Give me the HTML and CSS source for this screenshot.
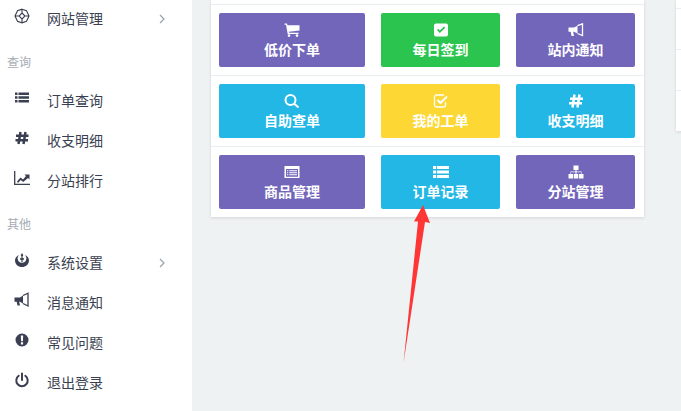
FILE: index.html
```html
<!DOCTYPE html>
<html lang="zh-CN">
<head>
<meta charset="utf-8">
<title>分站后台</title>
<link rel="stylesheet" href="styles.css">
</head>
<body>
<div class="app">
  <aside class="sidebar">
    <a class="item first">
      <svg class="nav-icon" viewBox="0 0 16 16"><path class="thin" d="M8 1.200 12.500 2.800 15 8 12.500 13.200 8 14.800 3.500 13.200 1 8 3.500 2.800ZM8 5 11 8 8 11 5 8ZM8 1.200V5M8 11V14.800M1 8H5M11 8H15"/></svg>
      <span class="label">网站管理</span>
      <svg class="chev" viewBox="0 0 6 10"><path d="M1 1l4 4-4 4"/></svg>
    </a>
    <div class="section">查询</div>
    <a class="item">
      <svg class="nav-icon" viewBox="0 0 16 16"><path class="fill" d="M1 2.500h2.500v2.500H1zM4.500 2.500H15v2.500H4.500zM1 6.200h2.500v2.500H1zM4.500 6.200H15v2.500H4.500zM1 9.900h2.500v2.500H1zM4.500 9.900H15v2.500H4.500z"/></svg>
      <span class="label">订单查询</span>
    </a>
    <a class="item">
      <svg class="nav-icon" viewBox="0 0 16 16"><path class="hash" d="M6.500 2 4.500 14M11.500 2 9.500 14M2 5.700h12.500M1.500 10.300H14"/></svg>
      <span class="label">收支明细</span>
    </a>
    <a class="item">
      <svg class="nav-icon" viewBox="0 0 16 16"><path class="line" d="M.700 1v13.300H16"/><path class="fill" d="M3 11.500 6.500 7.500 9 9.500 12 6 10.500 4.500H15.500V9.500L14 8 9.200 12 6.700 10 4 13Z"/></svg>
      <span class="label">分站排行</span>
    </a>
    <div class="section">其他</div>
    <a class="item">
      <svg class="nav-icon" viewBox="0 0 16 16"><path class="fill" d="M5 3C2.500 4 1 6 1 8.500 1 12.300 4.200 15 8 15S15 12.300 15 8.500C15 6 13.500 4 11 3 12 4.200 12.600 5.500 12.300 7 12 9 10.500 10.800 8 10.800S4 9 3.700 7C3.400 5.500 4 4.200 5 3Z"/><path class="fill" d="M8 1 9.300 3.300 8.600 4.300V6.300L10.300 5.800 9.500 7 10.300 8.200 8.600 7.800V10H7.400V7.800L5.700 8.200 6.500 7 5.700 5.800 7.400 6.300V4.300L6.700 3.300Z"/></svg>
      <span class="label">系统设置</span>
      <svg class="chev" viewBox="0 0 6 10"><path d="M1 1l4 4-4 4"/></svg>
    </a>
    <a class="item">
      <svg class="nav-icon" viewBox="0 0 16 16"><path class="fill" d="M.500 5.500H6L9 3.500V11.500L6 9.800H5.200L6 13.500H3.500L2.700 9.800H.500Z"/><path class="line" d="M9 3.500 14 1.200V14L9 11.500"/></svg>
      <span class="label">消息通知</span>
    </a>
    <a class="item">
      <svg class="nav-icon" viewBox="0 0 16 16"><path class="fill" fill-rule="evenodd" d="M8 1.500a6.500 6.500 0 1 0 0 13 6.500 6.500 0 0 0 0-13ZM6.800 3.500H9.200L8.900 9.200H7.100ZM6.900 10.300H9.100V12.400H6.900Z"/></svg>
      <span class="label">常见问题</span>
    </a>
    <a class="item">
      <svg class="nav-icon" viewBox="0 0 16 16"><path class="power" d="M8 1.500V8M4.700 3.800a5.700 5.700 0 1 0 6.600 0"/></svg>
      <span class="label">退出登录</span>
    </a>
  </aside>

  <main class="content">
    <section class="card">
      <div class="row">
        <a class="tile purple">
          <svg class="tile-icon" viewBox="0 0 16 14"><path class="w" d="M.500 .500H3L3.500 2.200H15.500V7.500L4.800 8.700 5 9.700H14.500V11H3.700L2 1.800H.500Z"/><circle class="w" cx="5" cy="12.600" r="1.300"/><circle class="w" cx="13" cy="12.600" r="1.300"/></svg>
          <span>低价下单</span>
        </a>
        <a class="tile green">
          <svg class="tile-icon" viewBox="0 0 16 14"><path class="w" fill-rule="evenodd" d="M3 .500H13A2 2 0 0 1 15 2.500V11.500A2 2 0 0 1 13 13.500H3A2 2 0 0 1 1 11.500V2.500A2 2 0 0 1 3 .500ZM4 7 6.800 10 12.300 4.800 11 3.500 6.800 7.500 5.300 5.700Z"/></svg>
          <span>每日签到</span>
        </a>
        <a class="tile purple">
          <svg class="tile-icon" viewBox="0 0 16 14"><path class="w" d="M.500 4.500H6L9.500 2.700V10.500L6 8.800H5.200L6 13H3.500L2.700 8.800H.500Z"/><path class="wl" d="M9.500 2.700 14.500 .8V12.500L9.500 10.500"/></svg>
          <span>站内通知</span>
        </a>
        <a class="tile blue">
          <svg class="tile-icon" viewBox="0 0 16 14"><circle class="wl2" cx="6.500" cy="6" r="5"/><path class="wl2" d="M10 9.600 14.500 13.500"/></svg>
          <span>自助查单</span>
        </a>
        <a class="tile yellow">
          <svg class="tile-icon" viewBox="0 0 16 14"><path class="wl" d="M12.500 8V11A2 2 0 0 1 10.500 13H3.500A2 2 0 0 1 1.500 11V3A2 2 0 0 1 3.500 1H11"/><path class="wl2" d="M4.500 6 7.500 9 14 2.500"/></svg>
          <span>我的工单</span>
        </a>
        <a class="tile blue">
          <svg class="tile-icon" viewBox="0 0 16 14"><path class="wl3" d="M6.500 .5 4.500 13.500M11.500 .5 9.500 13.500M2 4.700h13M1 9.300h13"/></svg>
          <span>收支明细</span>
        </a>
        <a class="tile purple">
          <svg class="tile-icon" viewBox="0 0 16 14"><path class="w" fill-rule="evenodd" d="M.500 1H15.500V13H.500ZM2 4V11.700H14V4ZM3 5.300H4.300V6.300H3ZM5.300 5.300H13V6.300H5.300ZM3 7.300H4.300V8.300H3ZM5.300 7.300H13V8.300H5.300ZM3 9.300H4.300V10.300H3ZM5.300 9.300H13V10.300H5.300Z"/></svg>
          <span>商品管理</span>
        </a>
        <a class="tile blue">
          <svg class="tile-icon" viewBox="0 0 16 14"><path class="w" d="M0 1H3V4H0ZM3.800 1H16V4H3.800ZM0 5.500H3V8.500H0ZM3.800 5.500H16V8.500H3.800ZM0 10H3V13H0ZM3.800 10H16V13H3.800Z"/></svg>
          <span>订单记录</span>
        </a>
        <a class="tile purple">
          <svg class="tile-icon" viewBox="0 0 16 14"><path class="w" d="M5.500 .5H10.500V5H8.500V6.500H13.500V9H15.500V13.500H11V9H13V7.300H8.500V9H10.300V13.500H5.700V9H7.500V7.300H3V9H5V13.500H.500V9H2.500V6.500H7.500V5H5.500Z"/></svg>
          <span>分站管理</span>
        </a>
      </div>
    </section>
    <section class="side-panel">
      <div class="side-row"></div>
      <div class="side-row"></div>
      <div class="side-row"></div>
    </section>
  </main>
</div>
<svg class="arrow" viewBox="0 0 681 411"><path d="M423 205 430 223 425 222 403.500 363 418 221.500 414 221.500Z"/></svg>
</body>
</html>
```
FILE: styles.css
```css
* { box-sizing: border-box; }
html, body { margin: 0; height: 100%; overflow: hidden; }
body {
  position: relative;
  font-family: "Noto Sans CJK SC", "Liberation Sans", sans-serif;
  font-size: 14px;
  color: #3a3f51;
  background: #eef2f3;
}
.app { display: flex; height: 411px; overflow: hidden; }
.sidebar { flex: 0 0 192px; background: #fff; }
.item {
  display: flex;
  align-items: center;
  height: 40px;
  padding-left: 14px;
}
.first { margin-top: -1px; }
.nav-icon { width: 16px; height: 16px; margin-top: -6px; flex: none; }
.label { margin-left: 17px; margin-top: -2px; line-height: 20px; }
.chev { width: 6px; height: 10px; margin-left: 56px; fill: none; stroke: #98a2ad; stroke-width: 1.200; }
.section {
  height: 42px;
  padding: 14px 0 0 7px;
  line-height: 18px;
  font-size: 12px;
  color: #a4abb3;
}
.fill { fill: #3a3f51; }
.line { fill: none; stroke: #3a3f51; stroke-width: 1.300; }
.thin { fill: none; stroke: #3a3f51; stroke-width: 1.100; }
.hash { fill: none; stroke: #3a3f51; stroke-width: 2.500; }
.power { fill: none; stroke: #3a3f51; stroke-width: 2; stroke-linecap: round; }

.content { flex: 1; display: flex; align-items: flex-start; gap: 32px; padding-left: 19px; min-width: 0; }
.card {
  flex: 0 0 433px;
  padding-top: 4px;
  background: #fff;
  box-shadow: 0 1px 3px rgba(0, 0, 0, .12);
}
.row {
  display: grid;
  grid-template-columns: 146px 119px 119px;
  grid-auto-rows: 54px;
  column-gap: 16px;
  row-gap: 17px;
  padding: 9px 9px 8px 8px;
  background:
    linear-gradient(#e9eef0, #e9eef0) 0 0 / 100% 1px no-repeat,
    linear-gradient(#e9eef0, #e9eef0) 0 71px / 100% 1px no-repeat,
    linear-gradient(#e9eef0, #e9eef0) 0 142px / 100% 1px no-repeat;
}
.tile {
  display: flex;
  flex-direction: column;
  align-items: center;
  justify-content: center;
  gap: 2px;
  padding-top: 2px;
  border-radius: 2px;
  color: #fff;
  font-weight: 700;
  font-size: 14px;
  line-height: 20px;
}
.tile-icon { width: 16px; height: 14px; }
.purple { background: #7266ba; }
.blue { background: #23b7e5; }
.green { background: #2ac44e; }
.yellow { background: #fdd733; }
.w { fill: #fff; }
.wl { fill: none; stroke: #fff; stroke-width: 1.300; }
.wl2 { fill: none; stroke: #fff; stroke-width: 2; }
.wl3 { fill: none; stroke: #fff; stroke-width: 2.500; }

.side-panel {
  flex: 0 0 200px;
  padding-top: 8px;
  background: #fff;
  box-shadow: 0 1px 3px rgba(0, 0, 0, .12);
}
.side-row { height: 41px; border-top: 1px solid #e9eef0; }
.arrow { position: absolute; left: 0; top: 0; width: 681px; height: 411px; pointer-events: none; }
.arrow path { fill: #fe3636; }
```
